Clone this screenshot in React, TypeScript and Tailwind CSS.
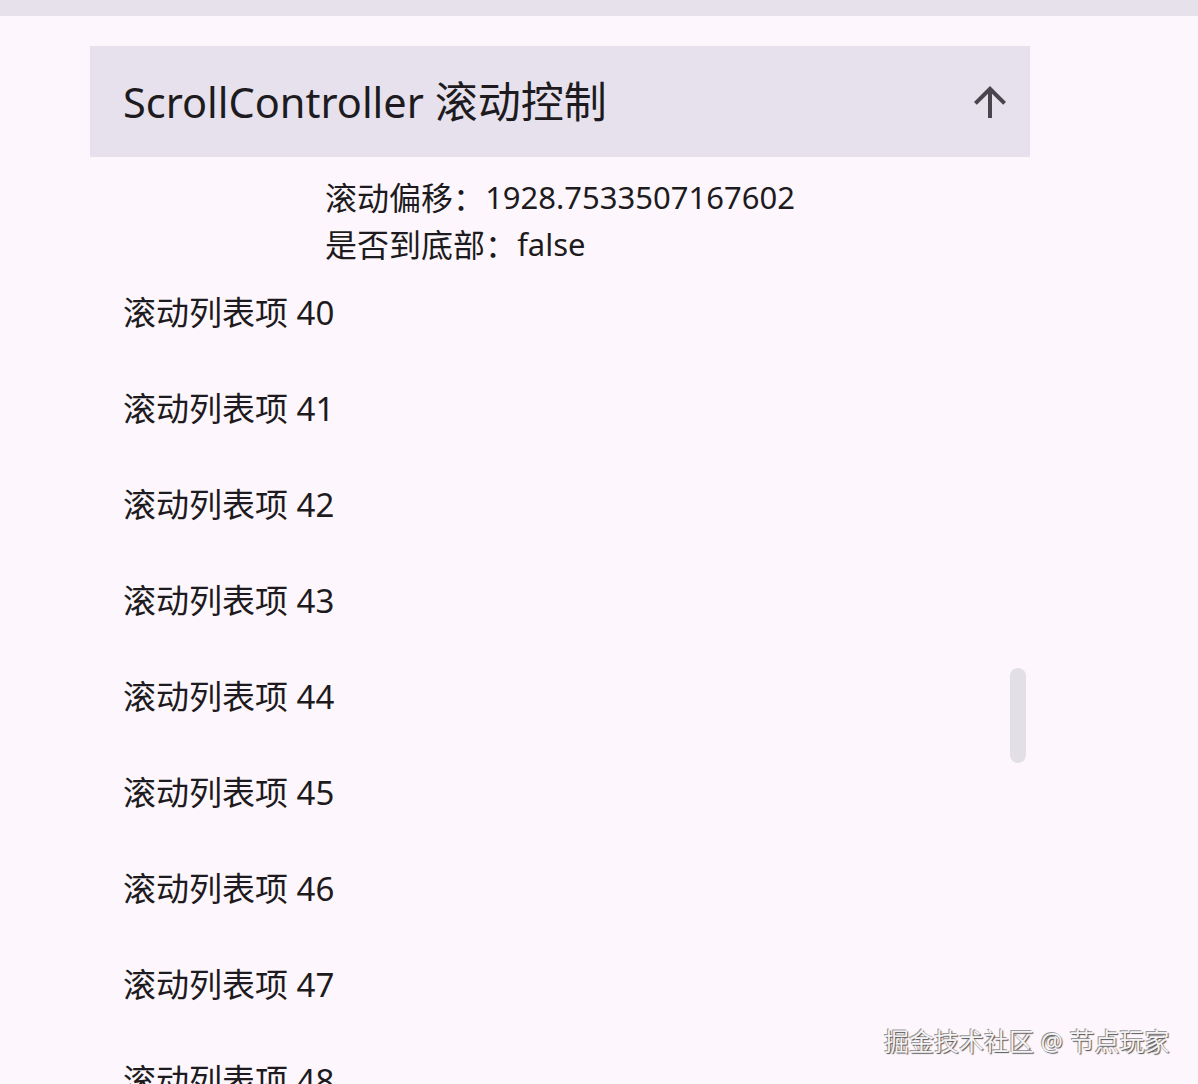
import React from "react";

const items = [40, 41, 42, 43, 44, 45, 46, 47, 48];

export default function App() {
  return (
    <div
      className="relative h-[1084px] w-[1198px] overflow-hidden bg-[#fdf7fd] text-[#1d1b20]"
      style={{ fontFamily: '"Noto Sans", "Noto Sans CJK SC", sans-serif' }}
    >
      <div className="h-4 w-full bg-[#e7e1ec]" />
      <div className="ml-[90px] mt-[30px] w-[940px]">
        <div className="flex h-[111px] items-center justify-between bg-[#e6e1ec] pl-[33px] pr-[16px]">
          <div className="leading-none">
            <span className="text-[41.5px]">ScrollController </span>
            <span className="text-[43px]">滚动控制</span>
          </div>
          <svg width="48" height="48" viewBox="0 0 24 24" className="text-[#49454f]">
            <path
              fill="currentColor"
              d="M4 12l1.41 1.41L11 7.83V20h2V7.83l5.58 5.59L20 12l-8-8-8 8z"
            />
          </svg>
        </div>
        <div className="flex h-[108px] justify-center pt-[17px]">
          <div>
            <div className="flex h-[47px] items-center leading-none">
              <span className="text-[32px]">滚动偏移：</span>
              <span className="text-[31px]">1928.7533507167602</span>
            </div>
            <div className="flex h-[47px] items-center leading-none">
              <span className="text-[32px]">是否到底部：</span>
              <span className="text-[31px]">false</span>
            </div>
          </div>
        </div>
        <div className="relative">
          {items.map((n) => (
            <div key={n} className="flex h-[96px] items-center pl-[33px] text-[33px]">
              滚动列表项 {n}
            </div>
          ))}
          <div className="absolute right-[4px] top-[403px] h-[95px] w-[16px] rounded-full bg-[#e3dfe6]" />
        </div>
      </div>
      <div className="absolute left-[884px] top-[1023px] text-[25px] leading-[36px] text-[#f4f2f5] [text-shadow:1px_1px_1px_#555,-1px_-1px_0_#999]">
        掘金技术社区 @ 节点玩家
      </div>
    </div>
  );
}
